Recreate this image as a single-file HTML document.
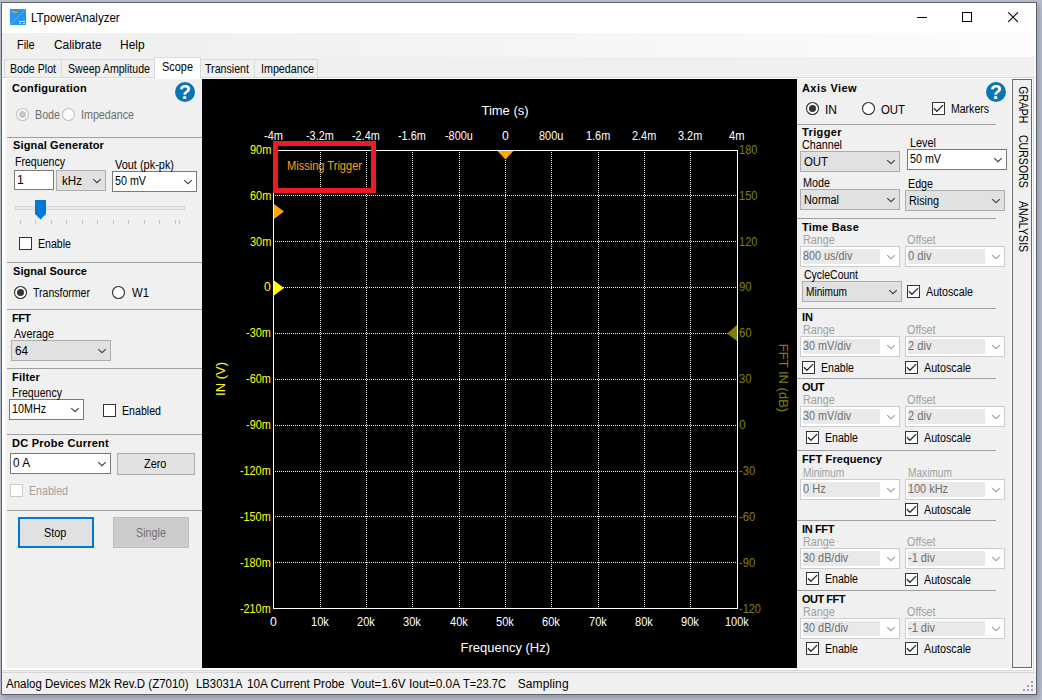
<!DOCTYPE html>
<html><head><meta charset="utf-8"><title>LTpowerAnalyzer</title>
<style>
html,body{margin:0;padding:0}
body{width:1042px;height:700px;overflow:hidden;position:relative;background:#b6bdcb;font-family:"Liberation Sans",sans-serif;font-size:11px}
body>div,body>svg,body>span{position:absolute}
.t{white-space:pre;display:block}
svg{overflow:visible}
</style></head><body>
<div style="left:1px;top:2px;width:1036px;height:693px;background:#f0f0f0;box-sizing:border-box;border:1px solid #5d6168;box-shadow:2px 3px 5px 0 rgba(60,66,88,.28);"></div>
<div style="left:2px;top:3px;width:1034px;height:30px;background:#ffffff;"></div>
<svg style="left:10px;top:9px" width="16" height="16" viewBox="0 0 16 16"><rect x="0" y="0" width="16" height="16" rx="0.8" fill="#2196f3"/><path d="M1 15 L15 1" stroke="#9dd0f9" stroke-width="0.8" stroke-dasharray="1 0.5"/><rect x="2" y="2" width="2.5" height="1" fill="#ffc107"/><rect x="4.2" y="3" width="2.8" height="1" fill="#ffc107"/><rect x="1" y="3" width="1" height="1" fill="#ffc107" opacity=".55"/><rect x="7" y="2" width="1" height="1" fill="#ffc107" opacity=".55"/><rect x="9" y="12" width="6" height="1" fill="#ffe93b"/><rect x="9" y="14" width="2" height="1" fill="#ffe93b"/><rect x="13" y="14" width="2" height="1" fill="#ffe93b"/></svg>
<svg style="left:917px;top:12px" width="10" height="10"><path d="M0 5.5 H10" stroke="#000" stroke-width="1"/></svg>
<svg style="left:962px;top:12px" width="10" height="10"><rect x="0.5" y="0.5" width="9" height="9" fill="none" stroke="#000" stroke-width="1"/></svg>
<svg style="left:1008px;top:12px" width="10" height="10"><path d="M0.3 0.3 L9.9 9.9 M9.9 0.3 L0.3 9.9" stroke="#000" stroke-width="1.15"/></svg>
<div style="left:2px;top:33px;width:1034px;height:25px;background:#f0f0f0;"></div>
<div style="left:2px;top:33px;width:1034px;height:24px;background:linear-gradient(to right,#f0f0f0 0%,#f1f1f1 20%,#fcfcfc 100%);"></div>
<div style="left:2px;top:77px;width:1032px;height:594px;background:#ffffff;box-sizing:border-box;border:1px solid #d9d9d9;border-left-color:#fff;"></div>
<div style="left:1034px;top:58px;width:2px;height:613px;background:#fafafa;"></div>
<div style="left:2px;top:58px;width:1px;height:19px;background:#fafafa;"></div>
<div style="left:4px;top:59px;width:58px;height:19px;background:#f0f0f0;box-sizing:border-box;border:1px solid #d9d9d9;"></div>
<div style="left:61px;top:59px;width:94px;height:19px;background:#f0f0f0;box-sizing:border-box;border:1px solid #d9d9d9;"></div>
<div style="left:198px;top:59px;width:57px;height:19px;background:#f0f0f0;box-sizing:border-box;border:1px solid #d9d9d9;"></div>
<div style="left:254px;top:59px;width:64px;height:19px;background:#f0f0f0;box-sizing:border-box;border:1px solid #d9d9d9;"></div>
<div style="left:154px;top:57px;width:47px;height:22px;background:#ffffff;box-sizing:border-box;border:1px solid #d9d9d9;border-bottom:none;"></div>
<div style="left:6px;top:79px;width:196px;height:589px;background:#f0f0f0;"></div>
<svg style="left:174px;top:81px" width="22" height="22" viewBox="0 0 22 22"><circle cx="11" cy="11" r="10" fill="#0b74b5"/><text x="11" y="17.9" text-anchor="middle" font-family="Liberation Sans, sans-serif" font-weight="bold" font-size="19.5" fill="#fff">?</text></svg>
<svg style="left:16px;top:108px" width="14" height="14" viewBox="0 0 14 14"><circle cx="6.5" cy="6.5" r="6" fill="#fbfbfb" stroke="#c4c4c4" stroke-width="1.15"/><circle cx="6.5" cy="6.5" r="3.5" fill="#c6c6c6"/></svg>
<svg style="left:62px;top:108px" width="14" height="14" viewBox="0 0 14 14"><circle cx="6.5" cy="6.5" r="6" fill="#fbfbfb" stroke="#c4c4c4" stroke-width="1.15"/></svg>
<div style="left:7px;top:137px;width:195px;height:1px;background:#a0a0a0;"></div>
<div style="left:14px;top:170px;width:40px;height:20px;background:#fff;box-sizing:border-box;border:1px solid #7a7a7a;"></div>
<div style="left:56px;top:170px;width:50px;height:21px;background:#e1e1e1;box-sizing:border-box;border:1px solid #adadad;"></div>
<svg style="left:92px;top:178px" width="9" height="6" viewBox="0 0 9 6"><path d="M1.2 1.1 L5 4.6 L8.8 1.1" fill="none" stroke="#404040" stroke-width="1.15"/></svg>
<div style="left:112px;top:171px;width:85px;height:21px;background:#fff;box-sizing:border-box;border:1px solid #7a7a7a;"></div>
<svg style="left:183px;top:179px" width="9" height="6" viewBox="0 0 9 6"><path d="M1.2 1.1 L5 4.6 L8.8 1.1" fill="none" stroke="#404040" stroke-width="1.15"/></svg>
<div style="left:15px;top:206px;width:170px;height:4px;background:#e7eaea;box-sizing:border-box;border:1px solid #d6d6d6;"></div>
<svg style="left:35px;top:200px" width="11" height="20" viewBox="0 0 11 20"><path d="M0 0 H11 V14 L5.5 19.5 L0 14 Z" fill="#0078d7"/></svg>
<div style="left:20px;top:220px;width:1px;height:4px;background:#c4c4c4;"></div>
<div style="left:35px;top:220px;width:1px;height:4px;background:#c4c4c4;"></div>
<div style="left:51px;top:220px;width:1px;height:4px;background:#c4c4c4;"></div>
<div style="left:66px;top:220px;width:1px;height:4px;background:#c4c4c4;"></div>
<div style="left:82px;top:220px;width:1px;height:4px;background:#c4c4c4;"></div>
<div style="left:97px;top:220px;width:1px;height:4px;background:#c4c4c4;"></div>
<div style="left:113px;top:220px;width:1px;height:4px;background:#c4c4c4;"></div>
<div style="left:128px;top:220px;width:1px;height:4px;background:#c4c4c4;"></div>
<div style="left:144px;top:220px;width:1px;height:4px;background:#c4c4c4;"></div>
<div style="left:159px;top:220px;width:1px;height:4px;background:#c4c4c4;"></div>
<div style="left:175px;top:220px;width:1px;height:4px;background:#c4c4c4;"></div>
<div style="left:179px;top:220px;width:1px;height:4px;background:#c4c4c4;"></div>
<div style="left:19px;top:237px;width:13px;height:13px;background:#fff;box-sizing:border-box;border:1px solid #333333;"></div>
<div style="left:7px;top:262px;width:195px;height:1px;background:#a0a0a0;"></div>
<svg style="left:14px;top:286px" width="14" height="14" viewBox="0 0 14 14"><circle cx="6.5" cy="6.5" r="6" fill="#fff" stroke="#333" stroke-width="1.15"/><circle cx="6.5" cy="6.5" r="3.5" fill="#333"/></svg>
<svg style="left:112px;top:286px" width="14" height="14" viewBox="0 0 14 14"><circle cx="6.5" cy="6.5" r="6" fill="#fff" stroke="#333" stroke-width="1.15"/></svg>
<div style="left:7px;top:309px;width:195px;height:1px;background:#a0a0a0;"></div>
<div style="left:11px;top:340px;width:100px;height:21px;background:#e1e1e1;box-sizing:border-box;border:1px solid #adadad;"></div>
<svg style="left:97px;top:348px" width="9" height="6" viewBox="0 0 9 6"><path d="M1.2 1.1 L5 4.6 L8.8 1.1" fill="none" stroke="#404040" stroke-width="1.15"/></svg>
<div style="left:7px;top:368px;width:195px;height:1px;background:#a0a0a0;"></div>
<div style="left:9px;top:399px;width:75px;height:21px;background:#fff;box-sizing:border-box;border:1px solid #7a7a7a;"></div>
<svg style="left:70px;top:407px" width="9" height="6" viewBox="0 0 9 6"><path d="M1.2 1.1 L5 4.6 L8.8 1.1" fill="none" stroke="#404040" stroke-width="1.15"/></svg>
<div style="left:103px;top:404px;width:13px;height:13px;background:#fff;box-sizing:border-box;border:1px solid #333333;"></div>
<div style="left:7px;top:434px;width:195px;height:1px;background:#a0a0a0;"></div>
<div style="left:10px;top:453px;width:101px;height:21px;background:#fff;box-sizing:border-box;border:1px solid #7a7a7a;"></div>
<svg style="left:97px;top:461px" width="9" height="6" viewBox="0 0 9 6"><path d="M1.2 1.1 L5 4.6 L8.8 1.1" fill="none" stroke="#404040" stroke-width="1.15"/></svg>
<div style="left:117px;top:453px;width:78px;height:22px;background:#e1e1e1;box-sizing:border-box;border:1px solid #adadad;"></div>
<div style="left:10px;top:484px;width:13px;height:13px;background:#fdfdfd;box-sizing:border-box;border:1px solid #cccccc;"></div>
<div style="left:7px;top:510px;width:195px;height:1px;background:#a0a0a0;"></div>
<div style="left:18px;top:517px;width:76px;height:31px;background:#e1e1e1;box-sizing:border-box;border:1px solid #0078d7;border-width:2px;"></div>
<div style="left:113px;top:517px;width:76px;height:31px;background:#cccccc;box-sizing:border-box;border:1px solid #bfbfbf;"></div>
<div style="left:202px;top:79px;width:595px;height:589px;background:#000;"></div>
<svg style="left:202px;top:79px" width="595" height="588" viewBox="202 79 595 588" shape-rendering="crispEdges"><path d="M320.5 152 V608" stroke="#f0f0f0" stroke-width="1" stroke-dasharray="1 1"/><path d="M366.5 152 V608" stroke="#f0f0f0" stroke-width="1" stroke-dasharray="1 1"/><path d="M412.5 152 V608" stroke="#f0f0f0" stroke-width="1" stroke-dasharray="1 1"/><path d="M459.5 152 V608" stroke="#f0f0f0" stroke-width="1" stroke-dasharray="1 1"/><path d="M505.5 152 V608" stroke="#f0f0f0" stroke-width="1" stroke-dasharray="1 1"/><path d="M551.5 152 V608" stroke="#f0f0f0" stroke-width="1" stroke-dasharray="1 1"/><path d="M598.5 152 V608" stroke="#f0f0f0" stroke-width="1" stroke-dasharray="1 1"/><path d="M644.5 152 V608" stroke="#f0f0f0" stroke-width="1" stroke-dasharray="1 1"/><path d="M690.5 152 V608" stroke="#f0f0f0" stroke-width="1" stroke-dasharray="1 1"/><path d="M275 195.5 H737" stroke="#f0f0f0" stroke-width="1" stroke-dasharray="1 1"/><path d="M275 241.5 H737" stroke="#f0f0f0" stroke-width="1" stroke-dasharray="1 1"/><path d="M275 287.5 H737" stroke="#f0f0f0" stroke-width="1" stroke-dasharray="1 1"/><path d="M275 333.5 H737" stroke="#f0f0f0" stroke-width="1" stroke-dasharray="1 1"/><path d="M275 379.5 H737" stroke="#f0f0f0" stroke-width="1" stroke-dasharray="1 1"/><path d="M275 425.5 H737" stroke="#f0f0f0" stroke-width="1" stroke-dasharray="1 1"/><path d="M275 471.5 H737" stroke="#f0f0f0" stroke-width="1" stroke-dasharray="1 1"/><path d="M275 516.5 H737" stroke="#f0f0f0" stroke-width="1" stroke-dasharray="1 1"/><path d="M275 562.5 H737" stroke="#f0f0f0" stroke-width="1" stroke-dasharray="1 1"/><rect x="273.5" y="150.5" width="464" height="458" fill="none" stroke="#fff" stroke-width="1"/><g shape-rendering="auto"><path d="M497.5 151 H513.5 L505.5 159.5 Z" fill="#ffa500"/><path d="M274 204 L284 211.5 L274 219 Z" fill="#ffa500"/><path d="M274 280.5 L284 288 L274 295.5 Z" fill="#ffff00"/><path d="M737 325 L727 333.5 L737 341 Z" fill="#808000"/></g><rect x="275.5" y="143.5" width="98" height="46.5" fill="none" stroke="#ed1c24" stroke-width="5"/></svg>
<span class="t" style="left:221px;top:379px;font-size:13px;line-height:16px;color:#ffff00;transform:translate(-50%,-50%) rotate(-90deg);">IN (V)</span>
<span class="t" style="left:783px;top:378px;font-size:13px;line-height:16px;color:#808000;transform:translate(-50%,-50%) rotate(90deg);">FFT IN (dB)</span>
<div style="left:797px;top:79px;width:212px;height:589px;background:#f0f0f0;"></div>
<svg style="left:985px;top:81px" width="22" height="22" viewBox="0 0 22 22"><circle cx="11" cy="11" r="10" fill="#0b74b5"/><text x="11" y="17.9" text-anchor="middle" font-family="Liberation Sans, sans-serif" font-weight="bold" font-size="19.5" fill="#fff">?</text></svg>
<svg style="left:806px;top:102px" width="14" height="14" viewBox="0 0 14 14"><circle cx="6.5" cy="6.5" r="6" fill="#fff" stroke="#333" stroke-width="1.15"/><circle cx="6.5" cy="6.5" r="3.5" fill="#333"/></svg>
<svg style="left:862px;top:102px" width="14" height="14" viewBox="0 0 14 14"><circle cx="6.5" cy="6.5" r="6" fill="#fff" stroke="#333" stroke-width="1.15"/></svg>
<div style="left:932px;top:102px;width:13px;height:13px;background:#fff;box-sizing:border-box;border:1px solid #333333;"></div>
<svg style="left:932px;top:102px" width="13" height="13" viewBox="0 0 13 13"><path d="M1.9 6.2 L4.9 9.3 L11.1 3.1" fill="none" stroke="#2b2b2b" stroke-width="1.3"/></svg>
<div style="left:797px;top:124px;width:199px;height:1px;background:#a0a0a0;"></div>
<div style="left:800px;top:151px;width:100px;height:21px;background:#e1e1e1;box-sizing:border-box;border:1px solid #adadad;"></div>
<svg style="left:886px;top:159px" width="9" height="6" viewBox="0 0 9 6"><path d="M1.2 1.1 L5 4.6 L8.8 1.1" fill="none" stroke="#404040" stroke-width="1.15"/></svg>
<div style="left:907px;top:149px;width:100px;height:21px;background:#fff;box-sizing:border-box;border:1px solid #7a7a7a;"></div>
<svg style="left:993px;top:157px" width="9" height="6" viewBox="0 0 9 6"><path d="M1.2 1.1 L5 4.6 L8.8 1.1" fill="none" stroke="#404040" stroke-width="1.15"/></svg>
<div style="left:800px;top:189px;width:100px;height:21px;background:#e1e1e1;box-sizing:border-box;border:1px solid #adadad;"></div>
<svg style="left:886px;top:197px" width="9" height="6" viewBox="0 0 9 6"><path d="M1.2 1.1 L5 4.6 L8.8 1.1" fill="none" stroke="#404040" stroke-width="1.15"/></svg>
<div style="left:905px;top:190px;width:100px;height:21px;background:#e1e1e1;box-sizing:border-box;border:1px solid #adadad;"></div>
<svg style="left:991px;top:198px" width="9" height="6" viewBox="0 0 9 6"><path d="M1.2 1.1 L5 4.6 L8.8 1.1" fill="none" stroke="#404040" stroke-width="1.15"/></svg>
<div style="left:797px;top:218px;width:199px;height:1px;background:#a0a0a0;"></div>
<div style="left:800px;top:246px;width:100px;height:21px;background:#ffffff;box-sizing:border-box;border:1px solid #cccccc;"></div>
<div style="left:803px;top:249px;width:77px;height:15px;background:#e9e9e9;"></div>
<svg style="left:886px;top:254px" width="9" height="6" viewBox="0 0 9 6"><path d="M1.2 1.1 L5 4.6 L8.8 1.1" fill="none" stroke="#a0a0a0" stroke-width="1.15"/></svg>
<div style="left:905px;top:246px;width:100px;height:21px;background:#ffffff;box-sizing:border-box;border:1px solid #cccccc;"></div>
<div style="left:908px;top:249px;width:77px;height:15px;background:#e9e9e9;"></div>
<svg style="left:991px;top:254px" width="9" height="6" viewBox="0 0 9 6"><path d="M1.2 1.1 L5 4.6 L8.8 1.1" fill="none" stroke="#a0a0a0" stroke-width="1.15"/></svg>
<div style="left:802px;top:281px;width:100px;height:21px;background:#e1e1e1;box-sizing:border-box;border:1px solid #adadad;"></div>
<svg style="left:888px;top:289px" width="9" height="6" viewBox="0 0 9 6"><path d="M1.2 1.1 L5 4.6 L8.8 1.1" fill="none" stroke="#404040" stroke-width="1.15"/></svg>
<div style="left:907px;top:285px;width:13px;height:13px;background:#fff;box-sizing:border-box;border:1px solid #333333;"></div>
<svg style="left:907px;top:285px" width="13" height="13" viewBox="0 0 13 13"><path d="M1.9 6.2 L4.9 9.3 L11.1 3.1" fill="none" stroke="#2b2b2b" stroke-width="1.3"/></svg>
<div style="left:797px;top:308px;width:199px;height:1px;background:#a0a0a0;"></div>
<div style="left:800px;top:336px;width:100px;height:21px;background:#ffffff;box-sizing:border-box;border:1px solid #cccccc;"></div>
<div style="left:803px;top:339px;width:77px;height:15px;background:#e9e9e9;"></div>
<svg style="left:886px;top:344px" width="9" height="6" viewBox="0 0 9 6"><path d="M1.2 1.1 L5 4.6 L8.8 1.1" fill="none" stroke="#a0a0a0" stroke-width="1.15"/></svg>
<div style="left:905px;top:336px;width:100px;height:21px;background:#ffffff;box-sizing:border-box;border:1px solid #cccccc;"></div>
<div style="left:908px;top:339px;width:77px;height:15px;background:#e9e9e9;"></div>
<svg style="left:991px;top:344px" width="9" height="6" viewBox="0 0 9 6"><path d="M1.2 1.1 L5 4.6 L8.8 1.1" fill="none" stroke="#a0a0a0" stroke-width="1.15"/></svg>
<div style="left:802px;top:361px;width:13px;height:13px;background:#fff;box-sizing:border-box;border:1px solid #333333;"></div>
<svg style="left:802px;top:361px" width="13" height="13" viewBox="0 0 13 13"><path d="M1.9 6.2 L4.9 9.3 L11.1 3.1" fill="none" stroke="#2b2b2b" stroke-width="1.3"/></svg>
<div style="left:905px;top:361px;width:13px;height:13px;background:#fff;box-sizing:border-box;border:1px solid #333333;"></div>
<svg style="left:905px;top:361px" width="13" height="13" viewBox="0 0 13 13"><path d="M1.9 6.2 L4.9 9.3 L11.1 3.1" fill="none" stroke="#2b2b2b" stroke-width="1.3"/></svg>
<div style="left:797px;top:378px;width:199px;height:1px;background:#a0a0a0;"></div>
<div style="left:800px;top:406px;width:100px;height:21px;background:#ffffff;box-sizing:border-box;border:1px solid #cccccc;"></div>
<div style="left:803px;top:409px;width:77px;height:15px;background:#e9e9e9;"></div>
<svg style="left:886px;top:414px" width="9" height="6" viewBox="0 0 9 6"><path d="M1.2 1.1 L5 4.6 L8.8 1.1" fill="none" stroke="#a0a0a0" stroke-width="1.15"/></svg>
<div style="left:905px;top:406px;width:100px;height:21px;background:#ffffff;box-sizing:border-box;border:1px solid #cccccc;"></div>
<div style="left:908px;top:409px;width:77px;height:15px;background:#e9e9e9;"></div>
<svg style="left:991px;top:414px" width="9" height="6" viewBox="0 0 9 6"><path d="M1.2 1.1 L5 4.6 L8.8 1.1" fill="none" stroke="#a0a0a0" stroke-width="1.15"/></svg>
<div style="left:806px;top:431px;width:13px;height:13px;background:#fff;box-sizing:border-box;border:1px solid #333333;"></div>
<svg style="left:806px;top:431px" width="13" height="13" viewBox="0 0 13 13"><path d="M1.9 6.2 L4.9 9.3 L11.1 3.1" fill="none" stroke="#2b2b2b" stroke-width="1.3"/></svg>
<div style="left:905px;top:431px;width:13px;height:13px;background:#fff;box-sizing:border-box;border:1px solid #333333;"></div>
<svg style="left:905px;top:431px" width="13" height="13" viewBox="0 0 13 13"><path d="M1.9 6.2 L4.9 9.3 L11.1 3.1" fill="none" stroke="#2b2b2b" stroke-width="1.3"/></svg>
<div style="left:797px;top:450px;width:199px;height:1px;background:#a0a0a0;"></div>
<div style="left:800px;top:479px;width:100px;height:21px;background:#ffffff;box-sizing:border-box;border:1px solid #cccccc;"></div>
<div style="left:803px;top:482px;width:77px;height:15px;background:#e9e9e9;"></div>
<svg style="left:886px;top:487px" width="9" height="6" viewBox="0 0 9 6"><path d="M1.2 1.1 L5 4.6 L8.8 1.1" fill="none" stroke="#a0a0a0" stroke-width="1.15"/></svg>
<div style="left:905px;top:479px;width:100px;height:21px;background:#ffffff;box-sizing:border-box;border:1px solid #cccccc;"></div>
<div style="left:908px;top:482px;width:77px;height:15px;background:#e9e9e9;"></div>
<svg style="left:991px;top:487px" width="9" height="6" viewBox="0 0 9 6"><path d="M1.2 1.1 L5 4.6 L8.8 1.1" fill="none" stroke="#a0a0a0" stroke-width="1.15"/></svg>
<div style="left:905px;top:503px;width:13px;height:13px;background:#fff;box-sizing:border-box;border:1px solid #333333;"></div>
<svg style="left:905px;top:503px" width="13" height="13" viewBox="0 0 13 13"><path d="M1.9 6.2 L4.9 9.3 L11.1 3.1" fill="none" stroke="#2b2b2b" stroke-width="1.3"/></svg>
<div style="left:797px;top:520px;width:199px;height:1px;background:#a0a0a0;"></div>
<div style="left:800px;top:548px;width:100px;height:21px;background:#ffffff;box-sizing:border-box;border:1px solid #cccccc;"></div>
<div style="left:803px;top:551px;width:77px;height:15px;background:#e9e9e9;"></div>
<svg style="left:886px;top:556px" width="9" height="6" viewBox="0 0 9 6"><path d="M1.2 1.1 L5 4.6 L8.8 1.1" fill="none" stroke="#a0a0a0" stroke-width="1.15"/></svg>
<div style="left:905px;top:548px;width:100px;height:21px;background:#ffffff;box-sizing:border-box;border:1px solid #cccccc;"></div>
<div style="left:908px;top:551px;width:77px;height:15px;background:#e9e9e9;"></div>
<svg style="left:991px;top:556px" width="9" height="6" viewBox="0 0 9 6"><path d="M1.2 1.1 L5 4.6 L8.8 1.1" fill="none" stroke="#a0a0a0" stroke-width="1.15"/></svg>
<div style="left:806px;top:572px;width:13px;height:13px;background:#fff;box-sizing:border-box;border:1px solid #333333;"></div>
<svg style="left:806px;top:572px" width="13" height="13" viewBox="0 0 13 13"><path d="M1.9 6.2 L4.9 9.3 L11.1 3.1" fill="none" stroke="#2b2b2b" stroke-width="1.3"/></svg>
<div style="left:905px;top:573px;width:13px;height:13px;background:#fff;box-sizing:border-box;border:1px solid #333333;"></div>
<svg style="left:905px;top:573px" width="13" height="13" viewBox="0 0 13 13"><path d="M1.9 6.2 L4.9 9.3 L11.1 3.1" fill="none" stroke="#2b2b2b" stroke-width="1.3"/></svg>
<div style="left:797px;top:590px;width:199px;height:1px;background:#a0a0a0;"></div>
<div style="left:800px;top:618px;width:100px;height:21px;background:#ffffff;box-sizing:border-box;border:1px solid #cccccc;"></div>
<div style="left:803px;top:621px;width:77px;height:15px;background:#e9e9e9;"></div>
<svg style="left:886px;top:626px" width="9" height="6" viewBox="0 0 9 6"><path d="M1.2 1.1 L5 4.6 L8.8 1.1" fill="none" stroke="#a0a0a0" stroke-width="1.15"/></svg>
<div style="left:905px;top:618px;width:100px;height:21px;background:#ffffff;box-sizing:border-box;border:1px solid #cccccc;"></div>
<div style="left:908px;top:621px;width:77px;height:15px;background:#e9e9e9;"></div>
<svg style="left:991px;top:626px" width="9" height="6" viewBox="0 0 9 6"><path d="M1.2 1.1 L5 4.6 L8.8 1.1" fill="none" stroke="#a0a0a0" stroke-width="1.15"/></svg>
<div style="left:806px;top:642px;width:13px;height:13px;background:#fff;box-sizing:border-box;border:1px solid #333333;"></div>
<svg style="left:806px;top:642px" width="13" height="13" viewBox="0 0 13 13"><path d="M1.9 6.2 L4.9 9.3 L11.1 3.1" fill="none" stroke="#2b2b2b" stroke-width="1.3"/></svg>
<div style="left:905px;top:642px;width:13px;height:13px;background:#fff;box-sizing:border-box;border:1px solid #333333;"></div>
<svg style="left:905px;top:642px" width="13" height="13" viewBox="0 0 13 13"><path d="M1.9 6.2 L4.9 9.3 L11.1 3.1" fill="none" stroke="#2b2b2b" stroke-width="1.3"/></svg>
<div style="left:1009px;top:79px;width:2px;height:589px;background:#f0f0f0;"></div>
<div style="left:1011px;top:78px;width:22px;height:591px;background:#ffffff;"></div>
<div style="left:1012px;top:79px;width:20px;height:589px;background:#f0f0f0;box-sizing:border-box;border:1px solid #696969;"></div>
<svg style="left:1012px;top:79px" width="20" height="588" viewBox="1012 79 20 588"><text transform="translate(1018.6,86.3) rotate(90)" textLength="37" lengthAdjust="spacingAndGlyphs" font-family="Liberation Sans, sans-serif" font-size="13" fill="#000">GRAPH</text><text transform="translate(1018.6,135) rotate(90)" textLength="52.8" lengthAdjust="spacingAndGlyphs" font-family="Liberation Sans, sans-serif" font-size="13" fill="#000">CURSORS</text><text transform="translate(1018.6,201) rotate(90)" textLength="51.2" lengthAdjust="spacingAndGlyphs" font-family="Liberation Sans, sans-serif" font-size="13" fill="#000">ANALYSIS</text></svg>
<div style="left:2px;top:672px;width:1032px;height:1px;background:#d7d7d7;"></div>
<div style="left:2px;top:673px;width:1034px;height:21px;background:#f0f0f0;"></div>
<div style="left:1031px;top:681px;width:2px;height:2px;background:#a0a0a0;"></div>
<div style="left:1027px;top:685px;width:2px;height:2px;background:#a0a0a0;"></div>
<div style="left:1031px;top:685px;width:2px;height:2px;background:#a0a0a0;"></div>
<div style="left:1023px;top:689px;width:2px;height:2px;background:#a0a0a0;"></div>
<div style="left:1027px;top:689px;width:2px;height:2px;background:#a0a0a0;"></div>
<div style="left:1031px;top:689px;width:2px;height:2px;background:#a0a0a0;"></div>
<span class="t" style="left:31.00px;top:9.84px;font-size:12px;line-height:16px;color:#000;transform:scaleX(0.9580);transform-origin:0 0;">LTpowerAnalyzer</span>
<span class="t" style="left:17.30px;top:36.84px;font-size:12px;line-height:16px;color:#000;transform:scaleX(0.9099);transform-origin:0 0;">File</span>
<span class="t" style="left:54.00px;top:36.84px;font-size:12px;line-height:16px;color:#000;transform:scaleX(0.9910);transform-origin:0 0;">Calibrate</span>
<span class="t" style="left:120.00px;top:36.84px;font-size:12px;line-height:16px;color:#000;transform:scaleX(0.9965);transform-origin:0 0;">Help</span>
<span class="t" style="left:10.00px;top:60.84px;font-size:12px;line-height:16px;color:#000;transform:scaleX(0.8838);transform-origin:0 0;">Bode Plot</span>
<span class="t" style="left:68.00px;top:60.84px;font-size:12px;line-height:16px;color:#000;transform:scaleX(0.8842);transform-origin:0 0;">Sweep Amplitude</span>
<span class="t" style="left:205.00px;top:60.84px;font-size:12px;line-height:16px;color:#000;transform:scaleX(0.8875);transform-origin:0 0;">Transient</span>
<span class="t" style="left:261.00px;top:60.84px;font-size:12px;line-height:16px;color:#000;transform:scaleX(0.8926);transform-origin:0 0;">Impedance</span>
<span class="t" style="left:162.00px;top:58.84px;font-size:12px;line-height:16px;color:#000;transform:scaleX(0.9109);transform-origin:0 0;">Scope</span>
<span class="t" style="left:12.00px;top:80.69px;font-size:11px;line-height:15px;color:#000;font-weight:bold;letter-spacing:0.222px;">Configuration</span>
<span class="t" style="left:35.00px;top:106.84px;font-size:12px;line-height:16px;color:#6d6d6d;transform:scaleX(0.8919);transform-origin:0 0;">Bode</span>
<span class="t" style="left:81.00px;top:106.84px;font-size:12px;line-height:16px;color:#6d6d6d;transform:scaleX(0.8926);transform-origin:0 0;">Impedance</span>
<span class="t" style="left:13.00px;top:137.69px;font-size:11px;line-height:15px;color:#000;font-weight:bold;letter-spacing:0.147px;">Signal Generator</span>
<span class="t" style="left:15.00px;top:153.84px;font-size:12px;line-height:16px;color:#000;transform:scaleX(0.8818);transform-origin:0 0;">Frequency</span>
<span class="t" style="left:17.00px;top:171.84px;font-size:12px;line-height:16px;color:#000;transform:scaleX(1.0150);transform-origin:0 0;">1</span>
<span class="t" style="left:62.00px;top:172.84px;font-size:12px;line-height:16px;color:#000;transform:scaleX(0.9675);transform-origin:0 0;">kHz</span>
<span class="t" style="left:115.00px;top:156.84px;font-size:12px;line-height:16px;color:#000;transform:scaleX(0.9119);transform-origin:0 0;">Vout (pk-pk)</span>
<span class="t" style="left:115.00px;top:172.84px;font-size:12px;line-height:16px;color:#000;transform:scaleX(0.8937);transform-origin:0 0;">50 mV</span>
<span class="t" style="left:38.00px;top:235.84px;font-size:12px;line-height:16px;color:#000;transform:scaleX(0.8829);transform-origin:0 0;">Enable</span>
<span class="t" style="left:13.00px;top:263.69px;font-size:11px;line-height:15px;color:#000;font-weight:bold;letter-spacing:0.049px;">Signal Source</span>
<span class="t" style="left:33.00px;top:284.84px;font-size:12px;line-height:16px;color:#000;transform:scaleX(0.8782);transform-origin:0 0;">Transformer</span>
<span class="t" style="left:132.00px;top:284.84px;font-size:12px;line-height:16px;color:#000;transform:scaleX(0.9444);transform-origin:0 0;">W1</span>
<span class="t" style="left:12.00px;top:310.69px;font-size:11px;line-height:15px;color:#000;font-weight:bold;letter-spacing:-0.557px;">FFT</span>
<span class="t" style="left:14.00px;top:325.84px;font-size:12px;line-height:16px;color:#000;transform:scaleX(0.8992);transform-origin:0 0;">Average</span>
<span class="t" style="left:15.00px;top:342.84px;font-size:12px;line-height:16px;color:#000;transform:scaleX(0.9731);transform-origin:0 0;">64</span>
<span class="t" style="left:12.00px;top:369.69px;font-size:11px;line-height:15px;color:#000;font-weight:bold;letter-spacing:0.182px;">Filter</span>
<span class="t" style="left:12.00px;top:384.84px;font-size:12px;line-height:16px;color:#000;transform:scaleX(0.8818);transform-origin:0 0;">Frequency</span>
<span class="t" style="left:12.00px;top:400.84px;font-size:12px;line-height:16px;color:#000;transform:scaleX(0.8944);transform-origin:0 0;">10MHz</span>
<span class="t" style="left:122.00px;top:402.84px;font-size:12px;line-height:16px;color:#000;transform:scaleX(0.8854);transform-origin:0 0;">Enabled</span>
<span class="t" style="left:12.00px;top:435.69px;font-size:11px;line-height:15px;color:#000;font-weight:bold;letter-spacing:0.256px;">DC Probe Current</span>
<span class="t" style="left:13.00px;top:454.84px;font-size:12px;line-height:16px;color:#000;transform:scaleX(0.9793);transform-origin:0 0;">0 A</span>
<span class="t" style="left:144.31px;top:455.84px;font-size:12px;line-height:16px;color:#000;transform:scaleX(0.9066);transform-origin:0 0;">Zero</span>
<span class="t" style="left:29.00px;top:482.84px;font-size:12px;line-height:16px;color:#a0a0a0;transform:scaleX(0.8854);transform-origin:0 0;">Enabled</span>
<span class="t" style="left:44.30px;top:525.34px;font-size:12px;line-height:16px;color:#000;transform:scaleX(0.9072);transform-origin:0 0;">Stop</span>
<span class="t" style="left:135.55px;top:525.34px;font-size:12px;line-height:16px;color:#707070;transform:scaleX(0.8962);transform-origin:0 0;">Single</span>
<span class="t" style="left:481.50px;top:101.60px;font-size:13px;line-height:17px;color:#fff;letter-spacing:-0.023px;">Time (s)</span>
<span class="t" style="left:460.55px;top:638.60px;font-size:13px;line-height:17px;color:#fff;letter-spacing:-0.006px;">Frequency (Hz)</span>
<span class="t" style="left:263.70px;top:127.84px;font-size:12px;line-height:16px;color:#fff;transform:scaleX(0.9194);transform-origin:0 0;">-4m</span>
<span class="t" style="left:306.34px;top:127.84px;font-size:12px;line-height:16px;color:#fff;transform:scaleX(0.9033);transform-origin:0 0;">-3.2m</span>
<span class="t" style="left:352.34px;top:127.84px;font-size:12px;line-height:16px;color:#fff;transform:scaleX(0.9033);transform-origin:0 0;">-2.4m</span>
<span class="t" style="left:398.34px;top:127.84px;font-size:12px;line-height:16px;color:#fff;transform:scaleX(0.9033);transform-origin:0 0;">-1.6m</span>
<span class="t" style="left:445.33px;top:127.84px;font-size:12px;line-height:16px;color:#fff;transform:scaleX(0.9033);transform-origin:0 0;">-800u</span>
<span class="t" style="left:501.79px;top:127.84px;font-size:12px;line-height:16px;color:#fff;transform:scaleX(1.0196);transform-origin:0 0;">0</span>
<span class="t" style="left:539.07px;top:127.84px;font-size:12px;line-height:16px;color:#fff;transform:scaleX(0.9085);transform-origin:0 0;">800u</span>
<span class="t" style="left:586.08px;top:127.84px;font-size:12px;line-height:16px;color:#fff;transform:scaleX(0.9085);transform-origin:0 0;">1.6m</span>
<span class="t" style="left:632.08px;top:127.84px;font-size:12px;line-height:16px;color:#fff;transform:scaleX(0.9085);transform-origin:0 0;">2.4m</span>
<span class="t" style="left:678.08px;top:127.84px;font-size:12px;line-height:16px;color:#fff;transform:scaleX(0.9085);transform-origin:0 0;">3.2m</span>
<span class="t" style="left:729.44px;top:127.84px;font-size:12px;line-height:16px;color:#fff;transform:scaleX(0.9307);transform-origin:0 0;">4m</span>
<span class="t" style="left:269.79px;top:613.84px;font-size:12px;line-height:16px;color:#fff;transform:scaleX(1.0196);transform-origin:0 0;">0</span>
<span class="t" style="left:311.27px;top:613.84px;font-size:12px;line-height:16px;color:#fff;transform:scaleX(0.9227);transform-origin:0 0;">10k</span>
<span class="t" style="left:357.27px;top:613.84px;font-size:12px;line-height:16px;color:#fff;transform:scaleX(0.9227);transform-origin:0 0;">20k</span>
<span class="t" style="left:403.27px;top:613.84px;font-size:12px;line-height:16px;color:#fff;transform:scaleX(0.9227);transform-origin:0 0;">30k</span>
<span class="t" style="left:450.27px;top:613.84px;font-size:12px;line-height:16px;color:#fff;transform:scaleX(0.9227);transform-origin:0 0;">40k</span>
<span class="t" style="left:496.27px;top:613.84px;font-size:12px;line-height:16px;color:#fff;transform:scaleX(0.9227);transform-origin:0 0;">50k</span>
<span class="t" style="left:542.27px;top:613.84px;font-size:12px;line-height:16px;color:#fff;transform:scaleX(0.9227);transform-origin:0 0;">60k</span>
<span class="t" style="left:589.27px;top:613.84px;font-size:12px;line-height:16px;color:#fff;transform:scaleX(0.9227);transform-origin:0 0;">70k</span>
<span class="t" style="left:635.27px;top:613.84px;font-size:12px;line-height:16px;color:#fff;transform:scaleX(0.9227);transform-origin:0 0;">80k</span>
<span class="t" style="left:681.27px;top:613.84px;font-size:12px;line-height:16px;color:#fff;transform:scaleX(0.9227);transform-origin:0 0;">90k</span>
<span class="t" style="left:725.37px;top:613.84px;font-size:12px;line-height:16px;color:#fff;transform:scaleX(0.9092);transform-origin:0 0;">100k</span>
<span class="t" style="left:249.66px;top:141.54px;font-size:12px;line-height:16px;color:#ffff00;transform:scaleX(0.9140);transform-origin:0 0;">90m</span>
<span class="t" style="left:249.66px;top:187.54px;font-size:12px;line-height:16px;color:#ffff00;transform:scaleX(0.9140);transform-origin:0 0;">60m</span>
<span class="t" style="left:249.66px;top:233.54px;font-size:12px;line-height:16px;color:#ffff00;transform:scaleX(0.9140);transform-origin:0 0;">30m</span>
<span class="t" style="left:264.18px;top:278.54px;font-size:12px;line-height:16px;color:#ffff00;transform:scaleX(1.0196);transform-origin:0 0;">0</span>
<span class="t" style="left:246.19px;top:324.54px;font-size:12px;line-height:16px;color:#ffff00;transform:scaleX(0.9073);transform-origin:0 0;">-30m</span>
<span class="t" style="left:246.19px;top:370.54px;font-size:12px;line-height:16px;color:#ffff00;transform:scaleX(0.9073);transform-origin:0 0;">-60m</span>
<span class="t" style="left:246.19px;top:416.54px;font-size:12px;line-height:16px;color:#ffff00;transform:scaleX(0.9073);transform-origin:0 0;">-90m</span>
<span class="t" style="left:240.37px;top:462.54px;font-size:12px;line-height:16px;color:#ffff00;transform:scaleX(0.9004);transform-origin:0 0;">-120m</span>
<span class="t" style="left:240.37px;top:508.54px;font-size:12px;line-height:16px;color:#ffff00;transform:scaleX(0.9004);transform-origin:0 0;">-150m</span>
<span class="t" style="left:240.37px;top:555.24px;font-size:12px;line-height:16px;color:#ffff00;transform:scaleX(0.9004);transform-origin:0 0;">-180m</span>
<span class="t" style="left:240.37px;top:600.54px;font-size:12px;line-height:16px;color:#ffff00;transform:scaleX(0.9004);transform-origin:0 0;">-210m</span>
<span class="t" style="left:739.00px;top:141.64px;font-size:12px;line-height:16px;color:#808000;transform:scaleX(0.9206);transform-origin:0 0;">180</span>
<span class="t" style="left:739.00px;top:187.64px;font-size:12px;line-height:16px;color:#808000;transform:scaleX(0.9206);transform-origin:0 0;">150</span>
<span class="t" style="left:739.00px;top:233.64px;font-size:12px;line-height:16px;color:#808000;transform:scaleX(0.9206);transform-origin:0 0;">120</span>
<span class="t" style="left:739.00px;top:278.64px;font-size:12px;line-height:16px;color:#808000;transform:scaleX(0.9460);transform-origin:0 0;">90</span>
<span class="t" style="left:739.00px;top:324.64px;font-size:12px;line-height:16px;color:#808000;transform:scaleX(0.9460);transform-origin:0 0;">60</span>
<span class="t" style="left:739.00px;top:370.64px;font-size:12px;line-height:16px;color:#808000;transform:scaleX(0.9460);transform-origin:0 0;">30</span>
<span class="t" style="left:739.00px;top:416.64px;font-size:12px;line-height:16px;color:#808000;transform:scaleX(1.0196);transform-origin:0 0;">0</span>
<span class="t" style="left:739.00px;top:462.64px;font-size:12px;line-height:16px;color:#808000;transform:scaleX(0.9289);transform-origin:0 0;">-30</span>
<span class="t" style="left:739.00px;top:508.64px;font-size:12px;line-height:16px;color:#808000;transform:scaleX(0.9289);transform-origin:0 0;">-60</span>
<span class="t" style="left:739.00px;top:554.64px;font-size:12px;line-height:16px;color:#808000;transform:scaleX(0.9289);transform-origin:0 0;">-90</span>
<span class="t" style="left:739.00px;top:600.64px;font-size:12px;line-height:16px;color:#808000;transform:scaleX(0.9125);transform-origin:0 0;">-120</span>
<span class="t" style="left:287.00px;top:157.84px;font-size:12px;line-height:16px;color:#ffa500;transform:scaleX(0.9218);transform-origin:0 0;">Missing Trigger</span>
<span class="t" style="left:802.00px;top:80.69px;font-size:11px;line-height:15px;color:#000;font-weight:bold;letter-spacing:0.425px;">Axis View</span>
<span class="t" style="left:825.00px;top:101.84px;font-size:12px;line-height:16px;color:#000;transform:scaleX(1.0000);transform-origin:0 0;">IN</span>
<span class="t" style="left:881.00px;top:101.84px;font-size:12px;line-height:16px;color:#000;transform:scaleX(0.9470);transform-origin:0 0;">OUT</span>
<span class="t" style="left:951.00px;top:100.84px;font-size:12px;line-height:16px;color:#000;transform:scaleX(0.8767);transform-origin:0 0;">Markers</span>
<span class="t" style="left:802.00px;top:124.69px;font-size:11px;line-height:15px;color:#000;font-weight:bold;letter-spacing:0.386px;">Trigger</span>
<span class="t" style="left:802.00px;top:136.84px;font-size:12px;line-height:16px;color:#000;transform:scaleX(0.8948);transform-origin:0 0;">Channel</span>
<span class="t" style="left:910.00px;top:134.84px;font-size:12px;line-height:16px;color:#000;transform:scaleX(0.9063);transform-origin:0 0;">Level</span>
<span class="t" style="left:804.00px;top:153.84px;font-size:12px;line-height:16px;color:#000;transform:scaleX(0.9470);transform-origin:0 0;">OUT</span>
<span class="t" style="left:910.00px;top:150.84px;font-size:12px;line-height:16px;color:#000;transform:scaleX(0.8937);transform-origin:0 0;">50 mV</span>
<span class="t" style="left:803.00px;top:174.84px;font-size:12px;line-height:16px;color:#000;transform:scaleX(0.8991);transform-origin:0 0;">Mode</span>
<span class="t" style="left:908.00px;top:175.84px;font-size:12px;line-height:16px;color:#000;transform:scaleX(0.8919);transform-origin:0 0;">Edge</span>
<span class="t" style="left:804.00px;top:191.84px;font-size:12px;line-height:16px;color:#000;transform:scaleX(0.9051);transform-origin:0 0;">Normal</span>
<span class="t" style="left:909.00px;top:192.84px;font-size:12px;line-height:16px;color:#000;transform:scaleX(0.8993);transform-origin:0 0;">Rising</span>
<span class="t" style="left:802.00px;top:219.69px;font-size:11px;line-height:15px;color:#000;font-weight:bold;letter-spacing:0.241px;">Time Base</span>
<span class="t" style="left:803.00px;top:231.84px;font-size:12px;line-height:16px;color:#a0a0a0;transform:scaleX(0.8944);transform-origin:0 0;">Range</span>
<span class="t" style="left:907.00px;top:231.84px;font-size:12px;line-height:16px;color:#a0a0a0;transform:scaleX(0.8980);transform-origin:0 0;">Offset</span>
<span class="t" style="left:803.00px;top:248.34px;font-size:12px;line-height:16px;color:#6d6d6d;transform:scaleX(0.9031);transform-origin:0 0;">800 us/div</span>
<span class="t" style="left:908.00px;top:248.34px;font-size:12px;line-height:16px;color:#6d6d6d;transform:scaleX(0.9242);transform-origin:0 0;">0 div</span>
<span class="t" style="left:804.00px;top:266.84px;font-size:12px;line-height:16px;color:#000;transform:scaleX(0.8705);transform-origin:0 0;">CycleCount</span>
<span class="t" style="left:806.00px;top:283.84px;font-size:12px;line-height:16px;color:#000;transform:scaleX(0.8424);transform-origin:0 0;">Minimum</span>
<span class="t" style="left:926.00px;top:283.84px;font-size:12px;line-height:16px;color:#000;transform:scaleX(0.8918);transform-origin:0 0;">Autoscale</span>
<span class="t" style="left:802.00px;top:309.69px;font-size:11px;line-height:15px;color:#000;font-weight:bold;">IN</span>
<span class="t" style="left:803.00px;top:321.84px;font-size:12px;line-height:16px;color:#a0a0a0;transform:scaleX(0.8944);transform-origin:0 0;">Range</span>
<span class="t" style="left:907.00px;top:321.84px;font-size:12px;line-height:16px;color:#a0a0a0;transform:scaleX(0.8980);transform-origin:0 0;">Offset</span>
<span class="t" style="left:803.00px;top:338.34px;font-size:12px;line-height:16px;color:#6d6d6d;transform:scaleX(0.9035);transform-origin:0 0;">30 mV/div</span>
<span class="t" style="left:908.00px;top:338.34px;font-size:12px;line-height:16px;color:#6d6d6d;transform:scaleX(0.9242);transform-origin:0 0;">2 div</span>
<span class="t" style="left:821.00px;top:359.84px;font-size:12px;line-height:16px;color:#000;transform:scaleX(0.8829);transform-origin:0 0;">Enable</span>
<span class="t" style="left:924.00px;top:359.84px;font-size:12px;line-height:16px;color:#000;transform:scaleX(0.8918);transform-origin:0 0;">Autoscale</span>
<span class="t" style="left:802.00px;top:379.69px;font-size:11px;line-height:15px;color:#000;font-weight:bold;letter-spacing:-0.411px;">OUT</span>
<span class="t" style="left:803.00px;top:391.84px;font-size:12px;line-height:16px;color:#a0a0a0;transform:scaleX(0.8944);transform-origin:0 0;">Range</span>
<span class="t" style="left:907.00px;top:391.84px;font-size:12px;line-height:16px;color:#a0a0a0;transform:scaleX(0.8980);transform-origin:0 0;">Offset</span>
<span class="t" style="left:803.00px;top:408.34px;font-size:12px;line-height:16px;color:#6d6d6d;transform:scaleX(0.9035);transform-origin:0 0;">30 mV/div</span>
<span class="t" style="left:908.00px;top:408.34px;font-size:12px;line-height:16px;color:#6d6d6d;transform:scaleX(0.9242);transform-origin:0 0;">2 div</span>
<span class="t" style="left:825.00px;top:429.84px;font-size:12px;line-height:16px;color:#000;transform:scaleX(0.8829);transform-origin:0 0;">Enable</span>
<span class="t" style="left:924.00px;top:429.84px;font-size:12px;line-height:16px;color:#000;transform:scaleX(0.8918);transform-origin:0 0;">Autoscale</span>
<span class="t" style="left:802.00px;top:451.69px;font-size:11px;line-height:15px;color:#000;font-weight:bold;letter-spacing:0.089px;">FFT Frequency</span>
<span class="t" style="left:803.00px;top:464.84px;font-size:12px;line-height:16px;color:#a0a0a0;transform:scaleX(0.8457);transform-origin:0 0;">Minimum</span>
<span class="t" style="left:908.00px;top:464.84px;font-size:12px;line-height:16px;color:#a0a0a0;transform:scaleX(0.8441);transform-origin:0 0;">Maximum</span>
<span class="t" style="left:803.00px;top:481.34px;font-size:12px;line-height:16px;color:#6d6d6d;transform:scaleX(0.9249);transform-origin:0 0;">0 Hz</span>
<span class="t" style="left:908.00px;top:481.34px;font-size:12px;line-height:16px;color:#6d6d6d;transform:scaleX(0.9072);transform-origin:0 0;">100 kHz</span>
<span class="t" style="left:924.00px;top:501.84px;font-size:12px;line-height:16px;color:#000;transform:scaleX(0.8918);transform-origin:0 0;">Autoscale</span>
<span class="t" style="left:802.00px;top:521.69px;font-size:11px;line-height:15px;color:#000;font-weight:bold;letter-spacing:-0.370px;">IN FFT</span>
<span class="t" style="left:803.00px;top:533.84px;font-size:12px;line-height:16px;color:#a0a0a0;transform:scaleX(0.8944);transform-origin:0 0;">Range</span>
<span class="t" style="left:907.00px;top:533.84px;font-size:12px;line-height:16px;color:#a0a0a0;transform:scaleX(0.8980);transform-origin:0 0;">Offset</span>
<span class="t" style="left:803.00px;top:550.34px;font-size:12px;line-height:16px;color:#6d6d6d;transform:scaleX(0.9045);transform-origin:0 0;">30 dB/div</span>
<span class="t" style="left:908.00px;top:550.34px;font-size:12px;line-height:16px;color:#6d6d6d;transform:scaleX(0.9189);transform-origin:0 0;">-1 div</span>
<span class="t" style="left:825.00px;top:570.84px;font-size:12px;line-height:16px;color:#000;transform:scaleX(0.8829);transform-origin:0 0;">Enable</span>
<span class="t" style="left:924.00px;top:571.84px;font-size:12px;line-height:16px;color:#000;transform:scaleX(0.8918);transform-origin:0 0;">Autoscale</span>
<span class="t" style="left:802.00px;top:591.69px;font-size:11px;line-height:15px;color:#000;font-weight:bold;letter-spacing:-0.491px;">OUT FFT</span>
<span class="t" style="left:803.00px;top:603.84px;font-size:12px;line-height:16px;color:#a0a0a0;transform:scaleX(0.8944);transform-origin:0 0;">Range</span>
<span class="t" style="left:907.00px;top:603.84px;font-size:12px;line-height:16px;color:#a0a0a0;transform:scaleX(0.8980);transform-origin:0 0;">Offset</span>
<span class="t" style="left:803.00px;top:620.34px;font-size:12px;line-height:16px;color:#6d6d6d;transform:scaleX(0.9045);transform-origin:0 0;">30 dB/div</span>
<span class="t" style="left:908.00px;top:620.34px;font-size:12px;line-height:16px;color:#6d6d6d;transform:scaleX(0.9189);transform-origin:0 0;">-1 div</span>
<span class="t" style="left:825.00px;top:640.84px;font-size:12px;line-height:16px;color:#000;transform:scaleX(0.8829);transform-origin:0 0;">Enable</span>
<span class="t" style="left:924.00px;top:640.84px;font-size:12px;line-height:16px;color:#000;transform:scaleX(0.8918);transform-origin:0 0;">Autoscale</span>
<span class="t" style="left:6.00px;top:675.84px;font-size:12px;line-height:16px;color:#000;transform:scaleX(0.9584);transform-origin:0 0;">Analog Devices M2k Rev.D (Z7010)</span>
<span class="t" style="left:195.50px;top:675.84px;font-size:12px;line-height:16px;color:#000;transform:scaleX(0.9435);transform-origin:0 0;">LB3031A</span>
<span class="t" style="left:247.30px;top:675.84px;font-size:12px;line-height:16px;color:#000;transform:scaleX(0.9818);transform-origin:0 0;">10A Current Probe</span>
<span class="t" style="left:351.00px;top:675.84px;font-size:12px;line-height:16px;color:#000;transform:scaleX(0.9799);transform-origin:0 0;">Vout=1.6V</span>
<span class="t" style="left:408.60px;top:675.84px;font-size:12px;line-height:16px;color:#000;transform:scaleX(0.9880);transform-origin:0 0;">Iout=0.0A</span>
<span class="t" style="left:463.30px;top:675.84px;font-size:12px;line-height:16px;color:#000;transform:scaleX(0.9297);transform-origin:0 0;">T=23.7C</span>
<span class="t" style="left:517.70px;top:675.84px;font-size:12px;line-height:16px;color:#000;letter-spacing:0.121px;">Sampling</span>
</body></html>
